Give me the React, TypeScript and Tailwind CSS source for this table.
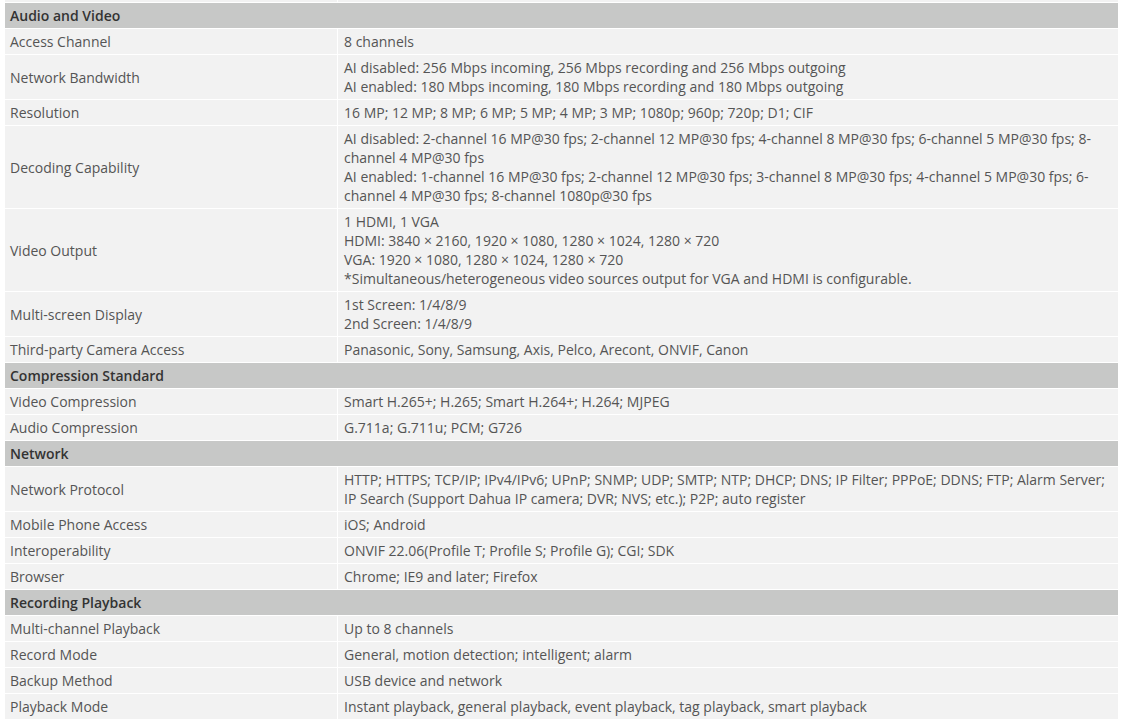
import React from 'react';

type Row = { label: string; value: string[] } | { section: string };

const rows: Row[] = [
  { section: 'Audio and Video' },
  { label: 'Access Channel', value: ['8 channels'] },
  {
    label: 'Network Bandwidth',
    value: [
      'AI disabled: 256 Mbps incoming, 256 Mbps recording and 256 Mbps outgoing',
      'AI enabled: 180 Mbps incoming, 180 Mbps recording and 180 Mbps outgoing',
    ],
  },
  { label: 'Resolution', value: ['16 MP; 12 MP; 8 MP; 6 MP; 5 MP; 4 MP; 3 MP; 1080p; 960p; 720p; D1; CIF'] },
  {
    label: 'Decoding Capability',
    value: [
      'AI disabled: 2-channel 16 MP@30 fps; 2-channel 12 MP@30 fps; 4-channel 8 MP@30 fps; 6-channel 5 MP@30 fps; 8-channel 4 MP@30 fps',
      'AI enabled: 1-channel 16 MP@30 fps; 2-channel 12 MP@30 fps; 3-channel 8 MP@30 fps; 4-channel 5 MP@30 fps; 6-channel 4 MP@30 fps; 8-channel 1080p@30 fps',
    ],
  },
  {
    label: 'Video Output',
    value: [
      '1 HDMI, 1 VGA',
      'HDMI: 3840 × 2160, 1920 × 1080, 1280 × 1024, 1280 × 720',
      'VGA: 1920 × 1080, 1280 × 1024, 1280 × 720',
      '*Simultaneous/heterogeneous video sources output for VGA and HDMI is configurable.',
    ],
  },
  { label: 'Multi-screen Display', value: ['1st Screen: 1/4/8/9', '2nd Screen: 1/4/8/9'] },
  { label: 'Third-party Camera Access', value: ['Panasonic, Sony, Samsung, Axis, Pelco, Arecont, ONVIF, Canon'] },
  { section: 'Compression Standard' },
  { label: 'Video Compression', value: ['Smart H.265+; H.265; Smart H.264+; H.264; MJPEG'] },
  { label: 'Audio Compression', value: ['G.711a; G.711u; PCM; G726'] },
  { section: 'Network' },
  {
    label: 'Network Protocol',
    value: [
      'HTTP; HTTPS; TCP/IP; IPv4/IPv6; UPnP; SNMP; UDP; SMTP; NTP; DHCP; DNS; IP Filter; PPPoE; DDNS; FTP; Alarm Server; IP Search (Support Dahua IP camera; DVR; NVS; etc.); P2P; auto register',
    ],
  },
  { label: 'Mobile Phone Access', value: ['iOS; Android'] },
  { label: 'Interoperability', value: ['ONVIF 22.06(Profile T; Profile S; Profile G); CGI; SDK'] },
  { label: 'Browser', value: ['Chrome; IE9 and later; Firefox'] },
  { section: 'Recording Playback' },
  { label: 'Multi-channel Playback', value: ['Up to 8 channels'] },
  { label: 'Record Mode', value: ['General, motion detection; intelligent; alarm'] },
  { label: 'Backup Method', value: ['USB device and network'] },
  { label: 'Playback Mode', value: ['Instant playback, general playback, event playback, tag playback, smart playback'] },
];

export default function App() {
  return (
    <div
      className="h-[720px] w-full overflow-hidden bg-white pl-[4px] text-[14px] leading-[19px] text-[#555]"
      style={{ fontFamily: '"Open Sans", "Noto Sans", Arial, sans-serif' }}
    >
      <table className="mt-[-24px] w-[1115px] table-fixed border-separate border-spacing-[1px]">
        <colgroup>
          <col className="w-[332px]" />
          <col className="w-[780px]" />
        </colgroup>
        <tbody>
          {/* tail of the previous row, cut off by the scroll position */}
          <tr>
            <td className="h-[25px] bg-[#f2f2f2]" />
            <td className="h-[25px] bg-[#f2f2f2]" />
          </tr>
          {rows.map((r, i) =>
            'section' in r ? (
              <tr key={i}>
                <td colSpan={2} className="bg-[#c7c8c7] px-[5px] py-[3px] font-semibold text-[#333]">
                  {r.section}
                </td>
              </tr>
            ) : (
              <tr key={i}>
                <td className="bg-[#f2f2f2] px-[5px] py-[3px] align-middle">{r.label}</td>
                <td className="bg-[#f2f2f2] pl-[6px] pr-[8px] py-[3px] align-middle">
                  {r.value.map((v, j) => (
                    <div key={j}>{v}</div>
                  ))}
                </td>
              </tr>
            )
          )}
        </tbody>
      </table>
    </div>
  );
}
